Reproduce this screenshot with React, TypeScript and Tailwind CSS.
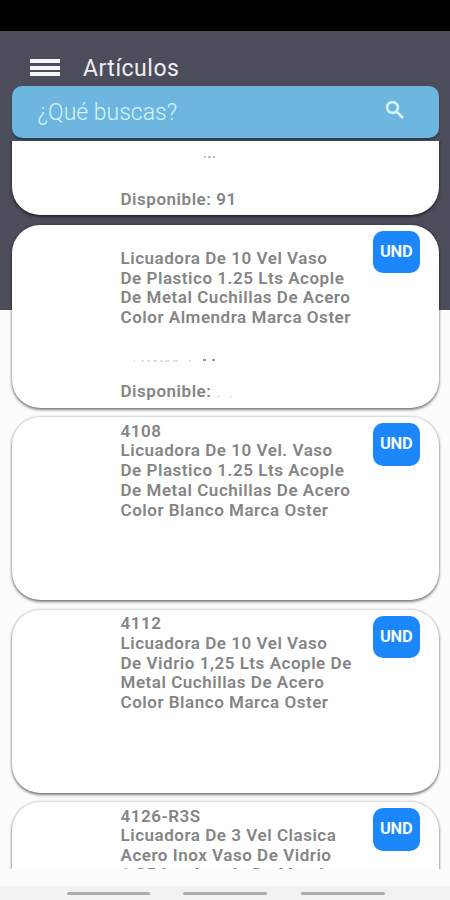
type Item = {
  code: string;
  lines: string[];
  stock?: string;
  hasPrice?: boolean;
};

const items: Item[] = [
  {
    code: "",
    lines: ["Licuadora De 10 Vel Vaso", "De Plastico 1.25 Lts Acople", "De Metal Cuchillas De Acero", "Color Almendra Marca Oster"],
    stock: "Disponible:",
    hasPrice: true,
  },
  {
    code: "4108",
    lines: ["Licuadora De 10 Vel. Vaso", "De Plastico 1.25 Lts Acople", "De Metal Cuchillas De Acero", "Color Blanco Marca Oster"],
  },
  {
    code: "4112",
    lines: ["Licuadora De 10 Vel Vaso", "De Vidrio 1,25 Lts Acople De", "Metal Cuchillas De Acero", "Color Blanco Marca Oster"],
  },
  {
    code: "4126-R3S",
    lines: ["Licuadora De 3 Vel Clasica", "Acero Inox Vaso De Vidrio", "1.25 Lts Acople De Metal"],
  },
];

const cardClass =
  "relative h-[183px] shrink-0 rounded-[28px] bg-[#fefefe] pl-[109px] pt-[4.8px] shadow-[0_2px_3px_rgba(0,0,0,0.45),0_0_3px_rgba(0,0,0,0.3)]";

function ItemCard({ item }: { item: Item }) {
  return (
    <div className={cardClass}>
      <p className="h-[19.7px]">{item.code}</p>
      {item.lines.map((line, i) => (
        <p key={line} className={item.lines.length === 3 && i === 2 ? "-mt-px" : ""}>
          {line}
        </p>
      ))}
      {/* faint remains of the hidden price */}
      {item.hasPrice && (
        <svg className="absolute left-[121px] top-[133px] h-[4px] w-[90px]" viewBox="0 0 90 4">
          <path d="M1 3h1M8 3h3M14 3h3M20 3h4M27 3h3M32 3h5M40 3h5M56 3h2" stroke="#c4c4c4" strokeWidth="1" />
          <path d="M70 2h3M79 2h3" stroke="#999" strokeWidth="2" />
        </svg>
      )}
      {item.stock && (
        <div className="flex pt-[54px]">
          <p>{item.stock}</p>
          <span className="ml-[6px] mt-[14px] h-px w-[3px] bg-[#ddd]" />
          <span className="ml-[9px] mt-[14px] h-px w-[3px] bg-[#e3e3e3]" />
        </div>
      )}
      <div className="absolute right-[19px] top-[6px] flex h-[42.5px] w-[46.5px] items-center justify-center rounded-[10px] bg-[#1b87fb] text-[16.5px] font-bold tracking-[-0.2px] text-[#f0f8ff]">
        UND
      </div>
    </div>
  );
}

export default function App() {
  return (
    <div className="flex h-[900px] w-[450px] flex-col overflow-hidden bg-[linear-gradient(#4c4d5a_310px,#fcfcfc_310px)] font-['Roboto',sans-serif]">
      <div className="h-[31px] shrink-0 bg-black" />

      <header className="flex h-[55px] shrink-0 items-center pl-[30px] pt-[18px]">
        <div className="flex w-[30px] flex-col gap-[2.5px]">
          <span className="h-[4px] bg-[#f5f5f7]" />
          <span className="h-[4px] bg-[#f5f5f7]" />
          <span className="h-[4px] bg-[#f5f5f7]" />
        </div>
        <h1 className="ml-[23px] mt-[2px] text-[23px] leading-[28px] tracking-[0.5px] text-[#eeeef2]">Artículos</h1>
      </header>

      <div className="mx-[11.5px] flex h-[52px] shrink-0 items-center justify-between rounded-[10px] bg-[#6cb6e0] pl-[26px] pr-[32px] shadow-[0_2px_2px_#293850]">
        <span className="mt-[2px] text-[23px] font-light text-[#d6f3fa]">¿Qué buscas?</span>
        <svg className="mb-[4px] size-[24px]" viewBox="0 0 24 24" fill="none" stroke="#d6f7fb" strokeWidth="2.6">
          <circle cx="9.5" cy="9.5" r="5.4" />
          <path d="M13.4 13.4L20 20" />
        </svg>
      </div>

      <main className="mt-[3px] flex h-[728px] shrink-0 flex-col gap-[9.5px] overflow-hidden px-[11.5px] text-[17px] font-semibold leading-[19.7px] tracking-[0.53px] text-[#858585]">
        <div className={`${cardClass} -mt-[109px]`}>
          <svg className="absolute left-[191px] top-[124px] h-[3px] w-[14px]" viewBox="0 0 14 3">
            <path d="M1 1h2M5 1h3M10 1h2" stroke="#aaa" strokeWidth="1.3" />
          </svg>
          <p className="pt-[153px]">Disponible: 91</p>
        </div>
        {items.map((item) => (
          <ItemCard key={item.code} item={item} />
        ))}
      </main>

      <nav className="mt-[17px] flex h-[14px] shrink-0 bg-[#f2f2f2] pl-[67px] pt-[5.5px]">
        <span className="h-[3.5px] w-[83px] rounded-full bg-[#acacac]" />
        <span className="ml-[33px] h-[3.5px] w-[84px] rounded-full bg-[#acacac]" />
        <span className="ml-[34px] h-[3.5px] w-[84px] rounded-full bg-[#acacac]" />
      </nav>
    </div>
  );
}
